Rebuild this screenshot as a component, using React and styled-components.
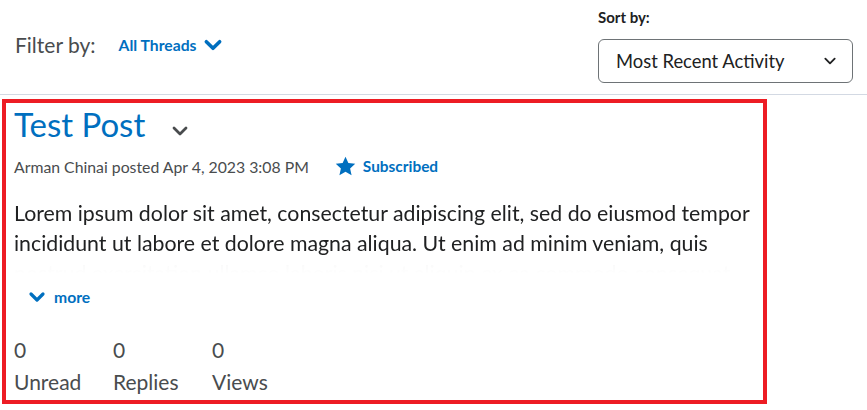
import React from "react";
import styled, { createGlobalStyle } from "styled-components";

const GlobalStyle = createGlobalStyle`
  body {
    margin: 0;
    background: #ffffff;
    font-family: Lato, "Noto Sans", sans-serif;
    color: #494c4e;
  }
`;

const Page = styled.div`
  width: 867px;
  height: 410px;
  overflow: hidden;
`;

const Toolbar = styled.div`
  display: flex;
  justify-content: space-between;
  align-items: flex-start;
  height: 95px;
  border-bottom: 1px solid #d3d9e3;
  padding: 0 14px 0 15px;
  box-sizing: border-box;
`;

const FilterGroup = styled.div`
  display: flex;
  align-items: center;
  margin-top: 32px;
`;

const FilterLabel = styled.span`
  font-size: 21px;
  color: #494c4e;
`;

const LinkButton = styled.button`
  display: flex;
  align-items: center;
  gap: ${(p) => p.$gap || 8}px;
  background: none;
  border: 0;
  padding: 0;
  margin-left: ${(p) => p.$offset || 0}px;
  font-family: inherit;
  font-size: 15.7px;
  font-weight: 700;
  color: #006fbf;
  cursor: pointer;
`;

const SortGroup = styled.div`
  display: flex;
  flex-direction: column;
  margin-top: 8px;
`;

const SortLabel = styled.span`
  font-size: 15px;
  font-weight: 700;
  color: #202122;
  margin-bottom: 13px;
`;

const Select = styled.div`
  display: flex;
  align-items: center;
  justify-content: space-between;
  width: 255px;
  height: 44px;
  box-sizing: border-box;
  padding: 0 15px 0 17px;
  border: 1px solid #6e7376;
  border-radius: 6px;
  font-size: 18.4px;
  color: #202122;
`;

const Card = styled.div`
  margin: 4px 0 0 2px;
  width: 765px;
  height: 305px;
  box-sizing: border-box;
  border: 4px solid #ed1c24;
  padding: 1px 8px 0 8px;
  display: flex;
  flex-direction: column;
`;

const TitleRow = styled.div`
  display: flex;
  align-items: center;
  gap: 26px;
`;

const Title = styled.h2`
  margin: 0;
  font-size: 33px;
  font-weight: 400;
  line-height: 40px;
  color: #006fbf;
`;

const TitleToggle = styled.span`
  display: flex;
  padding-top: 14px;
`;

const MetaRow = styled.div`
  display: flex;
  align-items: center;
  margin-top: 12px;
  font-size: 15.8px;
  color: #494c4e;
`;

const Subscribed = styled.span`
  display: flex;
  align-items: center;
  gap: 7px;
  margin-left: 26px;
  font-weight: 700;
  font-size: 15.4px;
  color: #006fbf;
`;

const Body = styled.p`
  margin: 22px 0 0;
  font-size: 21.3px;
  line-height: 30px;
  color: #202122;
  height: 90px;
  overflow: hidden;
  -webkit-mask-image: linear-gradient(to bottom, #000 60px, rgba(0, 0, 0, 0.03) 64px, transparent 76px);
  mask-image: linear-gradient(to bottom, #000 60px, rgba(0, 0, 0, 0.03) 64px, transparent 76px);
`;

const MoreRow = styled.div`
  padding-left: 14px;
`;

const Stats = styled.div`
  display: flex;
  margin-top: 28px;
`;

const Stat = styled.div`
  display: flex;
  flex-direction: column;
  width: 99px;
  font-size: 21px;
  line-height: 32px;
  color: #494c4e;
`;

function Chevron({ size = 14, color = "#006fbf", stroke = 3 }) {
  return (
    <svg width={size} height={size} viewBox="0 0 18 18" fill="none">
      <path
        d="M3 6l6 6 6-6"
        stroke={color}
        strokeWidth={stroke}
        strokeLinecap="round"
        strokeLinejoin="round"
      />
    </svg>
  );
}

function Star() {
  return (
    <svg width="21" height="20" viewBox="0 0 24 23">
      <path
        d="M12 0.8l3.3 7.2 7.9 0.9-5.9 5.4 1.7 7.8L12 18.1l-7 4 1.7-7.8L0.8 8.9l7.9-0.9z"
        fill="#006fbf"
      />
    </svg>
  );
}

const stats = [
  { value: 0, label: "Unread" },
  { value: 0, label: "Replies" },
  { value: 0, label: "Views" },
];

export default function App() {
  return (
    <Page>
      <GlobalStyle />
      <Toolbar>
        <FilterGroup>
          <FilterLabel>Filter by:</FilterLabel>
          <LinkButton $offset={23} $gap={7}>
            All Threads
            <Chevron size={20} stroke={3.2} />
          </LinkButton>
        </FilterGroup>
        <SortGroup>
          <SortLabel>Sort by:</SortLabel>
          <Select>
            Most Recent Activity
            <Chevron size={14} color="#202122" stroke={2.4} />
          </Select>
        </SortGroup>
      </Toolbar>
      <Card>
        <TitleRow>
          <Title>Test Post</Title>
          <TitleToggle>
            <Chevron size={18} color="#494c4e" stroke={2.8} />
          </TitleToggle>
        </TitleRow>
        <MetaRow>
          Arman Chinai posted Apr 4, 2023 3:08 PM
          <Subscribed>
            <Star />
            Subscribed
          </Subscribed>
        </MetaRow>
        <Body>
          Lorem ipsum dolor sit amet, consectetur adipiscing elit, sed do eiusmod tempor
          incididunt ut labore et dolore magna aliqua. Ut enim ad minim veniam, quis
          nostrud exercitation ullamco laboris nisi ut aliquip ex ea commodo consequat.
        </Body>
        <MoreRow>
          <LinkButton $gap={8}>
            <Chevron size={18} stroke={3.2} />
            more
          </LinkButton>
        </MoreRow>
        <Stats>
          {stats.map((s) => (
            <Stat key={s.label}>
              <span>{s.value}</span>
              <span>{s.label}</span>
            </Stat>
          ))}
        </Stats>
      </Card>
    </Page>
  );
}
